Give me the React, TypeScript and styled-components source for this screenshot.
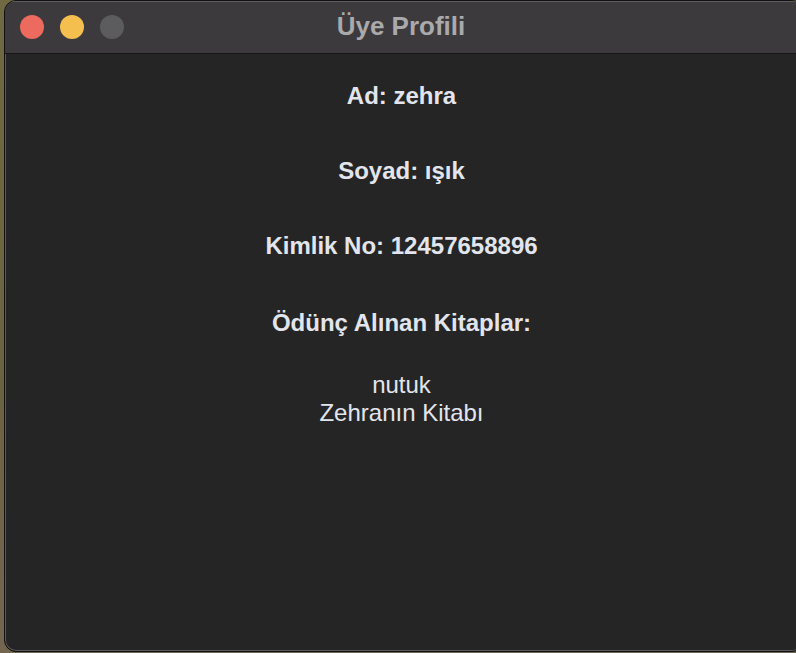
import React from "react";
import styled, { createGlobalStyle } from "styled-components";

const Global = createGlobalStyle`
  html, body {
    margin: 0;
    padding: 0;
    width: 796px;
    height: 653px;
    overflow: hidden;
    background: #6c6640;
  }
  #root {
    height: 653px;
  }
`;

const Desktop = styled.div`
  width: 796px;
  height: 653px;
  padding: 0 0 0 4px;
  box-sizing: border-box;
  background: linear-gradient(180deg, #6f6a42 0%, #6a6340 60%, #736650 100%);
`;

const Window = styled.div`
  width: 800px;
  height: 652px;
  box-sizing: border-box;
  border-radius: 12px;
  overflow: hidden;
  display: flex;
  flex-direction: column;
  background: #252525;
  border: 1px solid #111;
  box-shadow: inset 0 0 0 1px #5a595b;
  font-family: "Liberation Sans", Arial, Helvetica, sans-serif;
`;

const TitleBar = styled.div`
  height: 53px;
  flex: 0 0 53px;
  position: relative;
  display: flex;
  align-items: center;
  justify-content: center;
  background: #3c3a3d;
  border-bottom: 1px solid #161616;
  border-top: 1px solid #5e5d60;
  box-sizing: border-box;
`;

const Lights = styled.div`
  position: absolute;
  left: 15px;
  top: 13px;
  display: flex;
  gap: 16px;
`;

const Light = styled.span<{ $color: string }>`
  width: 24px;
  height: 24px;
  border-radius: 50%;
  background: ${(p) => p.$color};
`;

const Title = styled.div`
  font-size: 26px;
  font-weight: 700;
  color: #aaa9ab;
  margin-right: 6px;
  margin-top: -2px;
`;

const Content = styled.div`
  flex: 1;
  display: flex;
  flex-direction: column;
  align-items: center;
  padding-top: 28px;
  padding-right: 5px;
  color: #e3e5ee;
`;

const Heading = styled.div<{ $gap: number }>`
  font-size: 24px;
  font-weight: 700;
  line-height: 28px;
  margin-bottom: ${(p) => p.$gap}px;
`;

const BookList = styled.div`
  display: flex;
  flex-direction: column;
  align-items: center;
`;

const Book = styled.div`
  font-size: 24px;
  line-height: 28px;
`;

export default function App() {
  const books = ["nutuk", "Zehranın Kitabı"];
  return (
    <>
      <Global />
      <Desktop>
        <Window>
          <TitleBar>
            <Lights>
              <Light $color="#ed6a5e" />
              <Light $color="#f5bf4f" />
              <Light $color="#5c5b5d" />
            </Lights>
            <Title>Üye Profili</Title>
          </TitleBar>
          <Content>
            <Heading $gap={47}>Ad: zehra</Heading>
            <Heading $gap={47}>Soyad: ışık</Heading>
            <Heading $gap={49}>Kimlik No: 12457658896</Heading>
            <Heading $gap={34}>Ödünç Alınan Kitaplar:</Heading>
            <BookList>
              {books.map((b) => (
                <Book key={b}>{b}</Book>
              ))}
            </BookList>
          </Content>
        </Window>
      </Desktop>
    </>
  );
}
